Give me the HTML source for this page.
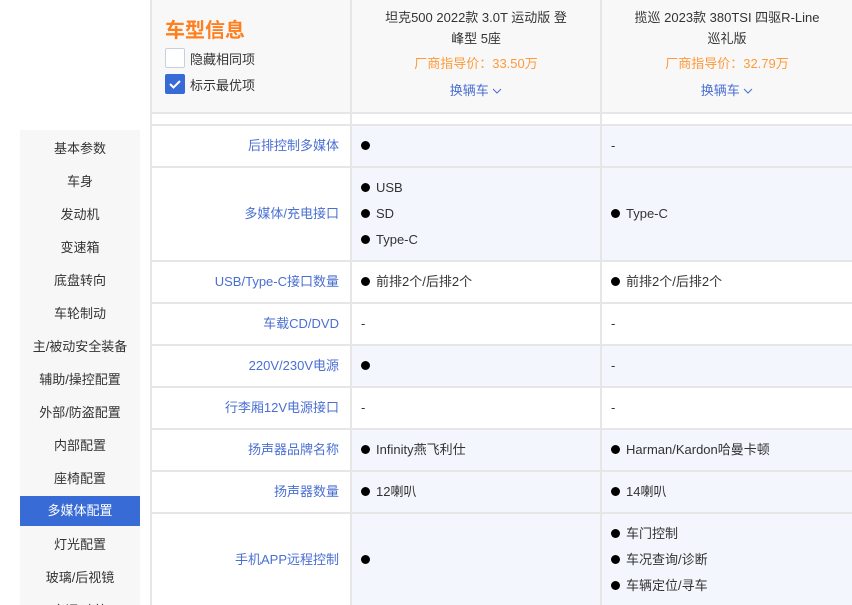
<!DOCTYPE html>
<html><head><meta charset="utf-8"><style>
*{margin:0;padding:0;box-sizing:border-box}
html,body{width:852px;height:605px;overflow:hidden}
body{background:#fff;font-family:"Liberation Sans","Noto Sans CJK SC",sans-serif;font-size:13px;color:#333;position:relative}
.a{position:absolute}
.side{left:20px;top:130px;width:120px;height:475px;background:#f7f7f7;overflow:hidden}
.si{position:absolute;left:0;width:120px;height:30px;line-height:32px;text-align:center;font-size:13px;color:#333}
.si.on{background:#386bd6;color:#fff}
.hl{position:absolute;left:150px;width:702px;height:2px;background:#e6e6e6}
.vl{position:absolute;width:2px;background:#e6e6e6}
.lab{position:absolute;left:152px;width:187px;text-align:right;color:#4a6fd2;font-size:13px;line-height:16px}
.v{position:absolute;font-size:13px;color:#333;line-height:16px}
.d{display:inline-block;width:9px;height:9px;border-radius:50%;background:#000;margin-right:6px;vertical-align:0px}
.sh{position:absolute;background:#f3f6fd}
</style></head><body>
<div class="a" style="left:150px;top:0;width:702px;height:113px;background:#f8f8f8"></div>
<div class="a" style="left:165px;top:14px;font-size:20px;font-weight:bold;color:#ff7f1f">车型信息</div>
<div class="a" style="left:165px;top:48px;width:20px;height:20px;border:1px solid #c8cfe0;border-radius:2px;background:#fff"></div>
<div class="a" style="left:190px;top:49px;font-size:13px">隐藏相同项</div>
<div class="a" style="left:165px;top:74px;width:20px;height:20px;border-radius:2px;background:#386bd6"><svg width="20" height="20"><path d="M5 10l3.5 3.5L15 7" stroke="#fff" stroke-width="2" fill="none"/></svg></div>
<div class="a" style="left:190px;top:75px;font-size:13px">标示最优项</div>
<div class="a" style="left:352px;top:7px;width:248px;text-align:center;line-height:21px">坦克500 2022款 3.0T 运动版 登<br>峰型 5座</div>
<div class="a" style="left:352px;top:53px;width:248px;text-align:center;color:#ff9a3a">厂商指导价：33.50万</div>
<div class="a" style="left:352px;top:80px;width:248px;text-align:center;color:#4a6fd2">换辆车 <svg width="10" height="8"><path d="M1 2l4 4 4-4" stroke="#4a6fd2" fill="none"/></svg></div>
<div class="a" style="left:602px;top:7px;width:250px;text-align:center;line-height:21px">揽巡 2023款 380TSI 四驱R-Line<br>巡礼版</div>
<div class="a" style="left:602px;top:53px;width:250px;text-align:center;color:#ff9a3a">厂商指导价：32.79万</div>
<div class="a" style="left:602px;top:80px;width:250px;text-align:center;color:#4a6fd2">换辆车 <svg width="10" height="8"><path d="M1 2l4 4 4-4" stroke="#4a6fd2" fill="none"/></svg></div>

<div class="sh" style="left:352px;top:126px;width:500px;height:135px"></div>
<div class="sh" style="left:352px;top:346px;width:500px;height:41px"></div>
<div class="sh" style="left:352px;top:430px;width:500px;height:175px"></div>

<div class="hl" style="top:112px"></div><div class="hl" style="top:124px"></div>
<div class="hl" style="top:166px"></div><div class="hl" style="top:260px"></div>
<div class="hl" style="top:302px"></div><div class="hl" style="top:344px"></div>
<div class="hl" style="top:386px"></div><div class="hl" style="top:428px"></div>
<div class="hl" style="top:470px"></div><div class="hl" style="top:512px"></div>
<div class="vl" style="left:150px;top:0;height:605px"></div>
<div class="vl" style="left:350px;top:0;height:605px"></div>
<div class="vl" style="left:600px;top:0;height:605px"></div>

<div class="lab" style="top:138px">后排控制多媒体</div>
<div class="lab" style="top:206px">多媒体/充电接口</div>
<div class="lab" style="top:274px">USB/Type-C接口数量</div>
<div class="lab" style="top:316px">车载CD/DVD</div>
<div class="lab" style="top:358px">220V/230V电源</div>
<div class="lab" style="top:400px">行李厢12V电源接口</div>
<div class="lab" style="top:442px">扬声器品牌名称</div>
<div class="lab" style="top:484px">扬声器数量</div>
<div class="lab" style="top:552px">手机APP远程控制</div>

<div class="v" style="left:361px;top:138px"><span class="d"></span></div>
<div class="v" style="left:611px;top:138px">-</div>
<div class="v" style="left:361px;top:180px"><span class="d"></span>USB</div>
<div class="v" style="left:361px;top:206px"><span class="d"></span>SD</div>
<div class="v" style="left:361px;top:232px"><span class="d"></span>Type-C</div>
<div class="v" style="left:611px;top:206px"><span class="d"></span>Type-C</div>
<div class="v" style="left:361px;top:274px"><span class="d"></span>前排2个/后排2个</div>
<div class="v" style="left:611px;top:274px"><span class="d"></span>前排2个/后排2个</div>
<div class="v" style="left:361px;top:316px">-</div><div class="v" style="left:611px;top:316px">-</div>
<div class="v" style="left:361px;top:358px"><span class="d"></span></div><div class="v" style="left:611px;top:358px">-</div>
<div class="v" style="left:361px;top:400px">-</div><div class="v" style="left:611px;top:400px">-</div>
<div class="v" style="left:361px;top:442px"><span class="d"></span>Infinity燕飞利仕</div>
<div class="v" style="left:611px;top:442px"><span class="d"></span>Harman/Kardon哈曼卡顿</div>
<div class="v" style="left:361px;top:484px"><span class="d"></span>12喇叭</div>
<div class="v" style="left:611px;top:484px"><span class="d"></span>14喇叭</div>
<div class="v" style="left:361px;top:552px"><span class="d"></span></div>
<div class="v" style="left:611px;top:526px"><span class="d"></span>车门控制</div>
<div class="v" style="left:611px;top:552px"><span class="d"></span>车况查询/诊断</div>
<div class="v" style="left:611px;top:578px"><span class="d"></span>车辆定位/寻车</div>

<div class="a side">
<div class="si" style="top:3px">基本参数</div>
<div class="si" style="top:36px">车身</div>
<div class="si" style="top:69px">发动机</div>
<div class="si" style="top:102px">变速箱</div>
<div class="si" style="top:135px">底盘转向</div>
<div class="si" style="top:168px">车轮制动</div>
<div class="si" style="top:201px">主/被动安全装备</div>
<div class="si" style="top:234px">辅助/操控配置</div>
<div class="si" style="top:267px">外部/防盗配置</div>
<div class="si" style="top:300px">内部配置</div>
<div class="si" style="top:333px">座椅配置</div>
<div class="si on" style="top:366px;line-height:30px">多媒体配置</div>
<div class="si" style="top:399px">灯光配置</div>
<div class="si" style="top:432px">玻璃/后视镜</div>
<div class="si" style="top:465px">空调/冰箱</div>
</div>
</body></html>
